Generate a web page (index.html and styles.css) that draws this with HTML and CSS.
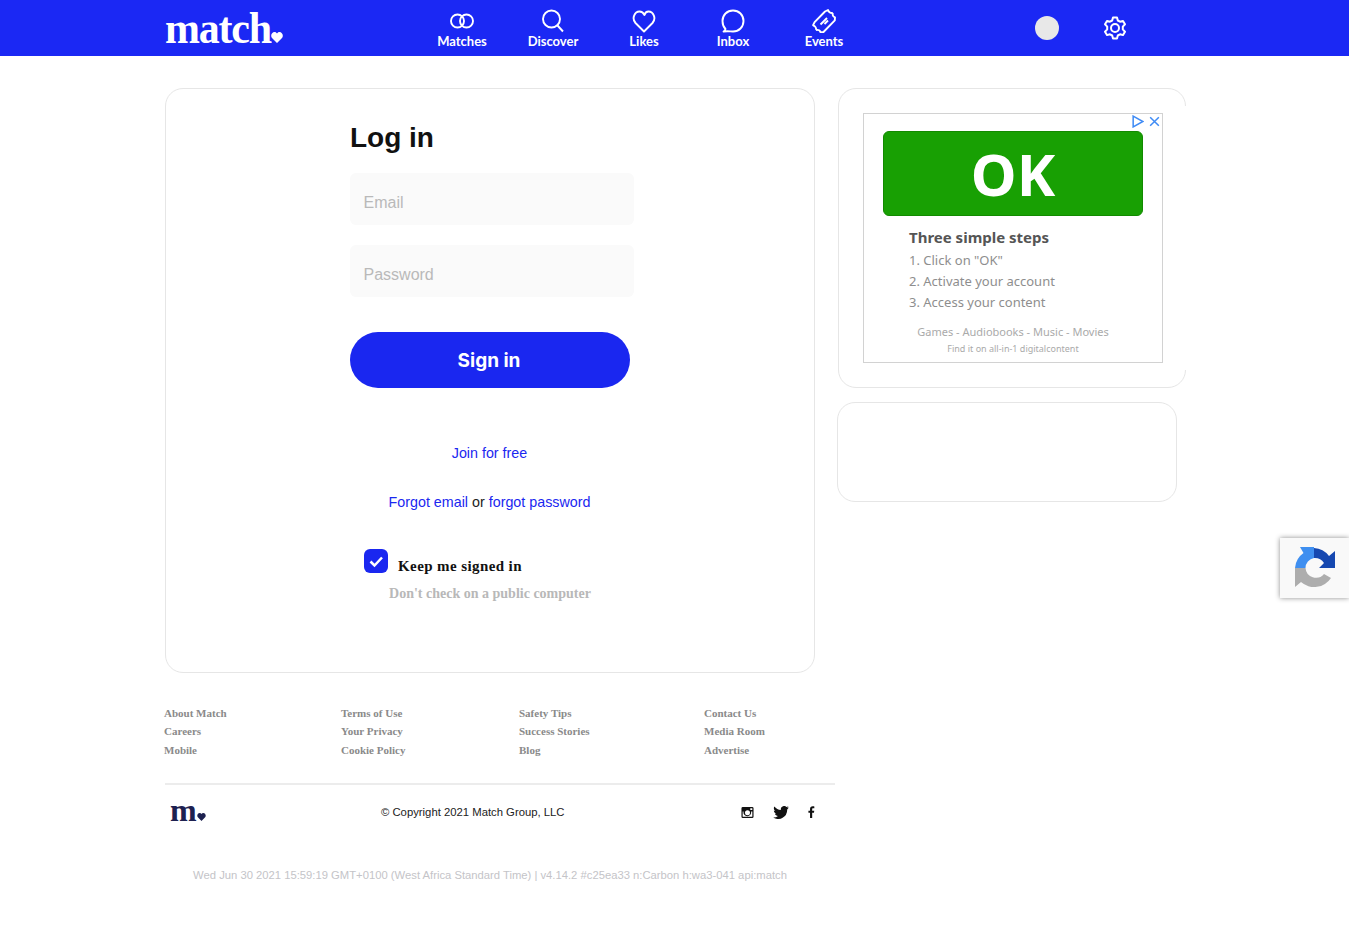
FILE: index.html
```html
<!DOCTYPE html>
<html lang="en">
<head>
    <meta charset="UTF-8">
    <title>Match - Log in</title>
    <link rel="stylesheet" href="styles.css">
</head>
<body>

<header class="topbar">
    <div class="brand"><span class="brand-word">match</span><svg class="brand-heart" viewBox="0 0 12 11"><path d="M6 11 1 6C-1 3.500 1 0 3.500 0 4.700 0 5.500.6 6 1.500 6.500.6 7.300 0 8.500 0 11 0 13 3.500 11 6z" fill="#fff"/></svg></div>
    <nav class="nav">
        <a class="nav-item item-matches">
            <svg class="nav-icon" viewBox="0 0 24 24"><circle cx="7.500" cy="12" r="6.500"/><circle cx="16.500" cy="12" r="6.500"/></svg>
            <span>Matches</span>
        </a>
        <a class="nav-item item-discover">
            <svg class="nav-icon" viewBox="0 0 24 24"><circle cx="10.500" cy="10" r="8.500"/><path d="M16.500 16.500 22 22.500"/></svg>
            <span>Discover</span>
        </a>
        <a class="nav-item item-likes">
            <svg class="nav-icon" viewBox="0 0 24 24"><path d="M12 22.500 3.500 14C-.5 9.500 2.500 2.500 7.500 2.500 10 2.500 11.500 4 12.500 6 13 4 14.500 2.500 16.500 2.500 21.500 2.500 24.500 9.500 20.500 14z"/></svg>
            <span>Likes</span>
        </a>
        <a class="nav-item item-inbox">
            <svg class="nav-icon" viewBox="0 0 24 24"><path d="M4.500 20C2.500 18 1.500 15 1.500 12 1.500 6 6 1.500 12 1.500S22.500 6 22.500 12 18 22.500 12 22.500C9 22.500 7 22 2.500 22.500 3.500 22 4.200 21 4.500 20z"/></svg>
            <span>Inbox</span>
        </a>
        <a class="nav-item item-events">
            <svg class="nav-icon" viewBox="0 0 24 24"><path d="M13 2.500 16 1c.3 1.500 2.500 3.200 4 3l.8.800c-.4 1.600.7 3.200 2.200 3.600l-.2 3L11.500 23l-3 .2c-.4-1.500-2-2.600-3.600-2.200l-.8-.8c.2-1.500-1.500-3.700-3-4l1.500-3z"/><path d="M8.500 15.500 15 9M12.500 15 16 11.500"/></svg>
            <span>Events</span>
        </a>
    </nav>
    <div class="avatar"></div>
    <svg class="gear" viewBox="0 0 24 24"><circle cx="12" cy="12" r="4"/><path d="M10 1.500h4l.8 3 2.200 1.200 3-.8 2 3.400-2.200 2.300v2.800l2.200 2.300-2 3.400-3-.8-2.200 1.200-.8 3h-4l-.8-3L7 18.300l-3 .8-2-3.400 2.200-2.300v-2.800L2 8.300l2-3.400 3 .8 2.200-1.200z"/></svg>
</header>

<main class="page">
    <div class="left-col">
        <section class="card login-card">
            <form class="login-form">
                <h1>Log in</h1>
                <div class="field">Email</div>
                <div class="field">Password</div>
                <button class="signin" type="button">Sign in</button>
                <p class="join"><a>Join for free</a></p>
                <p class="forgot"><a>Forgot email</a> or <a>forgot password</a></p>
                <div class="keep">
                    <span class="checkbox"><svg viewBox="0 0 24 24"><path d="M6.500 12.500 10.500 16.500 18 8.500"/></svg></span>
                    <span class="keep-label">Keep me signed in</span>
                </div>
                <p class="keep-note">Don't check on a public computer</p>
            </form>
        </section>

        <footer class="footer">
            <div class="links">
                <ul class="col-a"><li>About Match</li><li>Careers</li><li>Mobile</li></ul>
                <ul class="col-b"><li>Terms of Use</li><li>Your Privacy</li><li>Cookie Policy</li></ul>
                <ul class="col-c"><li>Safety Tips</li><li>Success Stories</li><li>Blog</li></ul>
                <ul class="col-d"><li>Contact Us</li><li>Media Room</li><li>Advertise</li></ul>
            </div>
            <div class="legal">
                <div class="mini-logo">m<svg viewBox="0 0 12 11"><path d="M6 11 1 6C-1 3.500 1 0 3.500 0 4.700 0 5.500.6 6 1.500 6.500.6 7.300 0 8.500 0 11 0 13 3.500 11 6z" fill="#1d2150"/></svg></div>
                <div class="copyright">© Copyright 2021 Match Group, LLC</div>
                <div class="social">
                    <svg class="ig" viewBox="0 0 14 14"><path fill-rule="evenodd" d="M2 1h10a1.500 1.500 0 0 1 1.500 1.500v9A1.500 1.500 0 0 1 12 13H2A1.500 1.500 0 0 1 .5 11.500v-9A1.500 1.500 0 0 1 2 1zm-.2 5v5.200c0 .3.200.5.500.5h9.400c.3 0 .5-.2.500-.5V6h-1.300a4.200 4.200 0 1 1-8.200 0zM7 4.500a2.700 2.700 0 1 0 0 5.400 2.700 2.700 0 0 0 0-5.400zM10 2.300v2h2.200v-2z"/></svg>
                    <svg class="tw" viewBox="0 0 24 20"><path d="M24 2.400c-.9.400-1.800.7-2.800.8 1-.6 1.800-1.600 2.200-2.700-1 .6-2 1-3.100 1.200A4.900 4.900 0 0 0 11.900 6.200C7.800 6 4.200 4 1.700.9.400 3.200 1 6 3.200 7.500c-.8 0-1.600-.2-2.200-.6 0 2.300 1.600 4.300 3.900 4.800-.7.200-1.500.2-2.200.1.600 2 2.400 3.300 4.600 3.400A9.900 9.900 0 0 1 0 17.700 14 14 0 0 0 21.500 5.300c1-.7 1.900-1.700 2.500-2.900z"/></svg>
                    <svg class="fb" viewBox="0 0 8 14"><path d="M2.300 14V7.800H.4V5.400h1.900V3.600C2.300 1.500 3.500.4 5.400.4c.9 0 1.600.1 1.900.1v2.200H6c-1 0-1.200.5-1.200 1.200v1.500h2.400l-.3 2.400H4.800V14z"/></svg>
                </div>
            </div>
            <p class="build">Wed Jun 30 2021 15:59:19 GMT+0100 (West Africa Standard Time) | v4.14.2 #c25ea33 n:Carbon h:wa3-041 api:match</p>
        </footer>
    </div>

    <aside class="right-col">
        <section class="card ad-card">
            <div class="ad">
                <div class="ad-marks">
                    <svg viewBox="0 0 12 12"><path d="M2 1 11 6 2 11z"/></svg>
                    <svg viewBox="0 0 12 12"><path d="M2 2 10 10M10 2 2 10"/></svg>
                </div>
                <div class="ad-ok">OK</div>
                <div class="ad-steps">
                    <h3>Three simple steps</h3>
                    <p>1. Click on "OK"</p>
                    <p>2. Activate your account</p>
                    <p>3. Access your content</p>
                </div>
                <p class="ad-cats">Games - Audiobooks - Music - Movies</p>
                <p class="ad-find">Find it on all-in-1 digitalcontent</p>
            </div>
        </section>
        <section class="card empty-card"></section>
    </aside>
</main>

<div class="recaptcha">
    <svg viewBox="0 0 41 41">
        <path d="M19 0H5L8.500 6A20 20 0 0 0 0 21H10.500A10 10 0 0 1 19 11z" fill="#3f8ff0"/>
        <path d="M19 1A20 20 0 0 1 34 9L40 4V21H24L29 16A11 11 0 0 0 19 11z" fill="#1648b0"/>
        <path d="M0 21H10.500A10.500 10.500 0 0 0 29 27L36 31A20 20 0 0 1 6 35L0 40z" fill="#adadad"/>
    </svg>
</div>

</body>
</html>
```

FILE: styles.css
```css
* {
    box-sizing: border-box;
}
body {
    margin: 0;
    background-color: #fff;
    color: #111;
    font-family: "Liberation Sans", Arial, sans-serif;
}
p, h1, h3, ul {
    margin: 0;
    padding: 0;
}
ul {
    list-style: none;
}
a {
    color: #1a27f0;
}

/* --- Top bar --- */
.topbar {
    display: flex;
    align-items: center;
    height: 56px;
    padding-left: 165px;
    background-color: #1b28f4;
    color: #fff;
}
.brand {
    display: flex;
    align-items: baseline;
    width: 272px;
    margin-top: 1px;
    font-family: "Liberation Serif", serif;
    font-size: 42px;
    font-weight: bold;
    line-height: 42px;
    letter-spacing: -1.200px;
}
.brand-word {
    display: inline-block;
    transform: scaleY(1.050);
    transform-origin: 0 80%;
}
.brand-heart {
    width: 12px;
    height: 11px;
    margin-left: 0;
}
.nav {
    display: flex;
    align-items: flex-start;
    height: 56px;
    padding-top: 9px;
}
.nav-item {
    display: flex;
    flex-direction: column;
    align-items: center;
    color: #fff;
    font-family: Lato, sans-serif;
    font-size: 13px;
    font-weight: 700;
    line-height: 15px;
}
.nav-item span {
    margin-top: 1px;
}
.nav-icon {
    width: 24px;
    height: 24px;
    fill: none;
    stroke: #fff;
    stroke-width: 1.900;
    stroke-linejoin: round;
}
.item-matches { width: 50px; }
.item-discover { width: 50px; margin-left: 41px; }
.item-likes { width: 40px; margin-left: 46px; }
.item-inbox { width: 40px; margin-left: 49px; }
.item-events { width: 40px; margin-left: 51px; }
.avatar {
    width: 24px;
    height: 24px;
    margin-left: 191px;
    border-radius: 50%;
    background-color: #e8e8e8;
}
.gear {
    width: 24px;
    height: 24px;
    margin-left: 44px;
    fill: none;
    stroke: #fff;
    stroke-width: 2;
    stroke-linejoin: round;
}

/* --- Main layout --- */
.page {
    display: flex;
    align-items: flex-start;
    gap: 23px;
    padding: 32px 0 0 165px;
}
.left-col {
    width: 650px;
}
.right-col {
    width: 348px;
}
.card {
    border: 1px solid #e6e6e6;
    border-radius: 18px;
    background-color: #fff;
}

/* --- Login card --- */
.login-card {
    height: 585px;
    padding: 31px 0 0 184px;
}
.login-form {
    width: 284px;
}
h1 {
    margin-bottom: 17px;
    font-size: 28px;
    font-weight: bold;
    line-height: 36px;
    color: #111;
}
.field {
    height: 52px;
    margin-bottom: 20px;
    padding: 21px 14px 0 13.500px;
    border-radius: 6px;
    background-color: #fafafa;
    color: #b9b9b9;
    font-size: 16px;
    line-height: 18px;
}
.signin {
    display: block;
    width: 280px;
    height: 56px;
    margin-top: 35px;
    padding: 0 2px 0 0;
    border: none;
    border-radius: 28px;
    background-color: #1a27f0;
    color: #fff;
    font-family: Inter, sans-serif;
    font-size: 19px;
    font-weight: 700;
}
.join, .forgot {
    width: 279px;
    text-align: center;
    font-size: 14.300px;
    line-height: 16px;
}
.join {
    margin-top: 57px;
}
.forgot {
    margin-top: 33px;
    color: #222;
}
.keep {
    display: flex;
    align-items: flex-start;
    margin: 39px 0 0 14px;
}
.checkbox {
    width: 24px;
    height: 24px;
    border-radius: 6px;
    background-color: #1a27f0;
}
.checkbox svg {
    display: block;
    fill: none;
    stroke: #fff;
    stroke-width: 2.500;
}
.keep-label {
    margin: 9px 0 0 10px;
    font-family: "Liberation Serif", serif;
    font-size: 15px;
    font-weight: bold;
    line-height: 17px;
    letter-spacing: 0.400px;
    color: #111;
}
.keep-note {
    width: 280px;
    margin-top: 11px;
    font-family: "Liberation Serif", serif;
    font-size: 14px;
    font-weight: bold;
    line-height: 16px;
    text-align: center;
    color: #b8b8b8;
}

/* --- Footer --- */
.footer {
    padding-top: 31px;
}
.links {
    display: flex;
    width: 670px;
    height: 81px;
    border-bottom: 2px solid #ececec;
}
.links ul {
    margin-top: -0.400px;
    font-family: "Liberation Serif", serif;
    font-size: 11px;
    font-weight: bold;
    color: #8a8a8a;
}
.links li {
    height: 18.500px;
    line-height: 18px;
}
.col-a { width: 177px; margin-left: -1px; }
.col-b { width: 178px; }
.col-c { width: 185px; }
.legal {
    display: flex;
    align-items: center;
    width: 670px;
    height: 54px;
}
.mini-logo {
    display: flex;
    align-items: baseline;
    width: 216px;
    padding-left: 5px;
    margin-top: -4px;
    font-family: "Liberation Serif", serif;
    font-size: 32px;
    font-weight: bold;
    line-height: 32px;
    color: #1d2150;
}
.mini-logo svg {
    width: 9px;
    height: 8px;
}
.copyright {
    width: 360px;
    font-size: 11.300px;
    color: #222;
}
.social {
    display: flex;
    align-items: center;
}
.social svg {
    fill: #111;
}
.ig { width: 13px; height: 13px; }
.tw { width: 16px; height: 13px; margin-left: 19px; }
.fb { width: 7px; height: 12px; margin-left: 19px; }
.build {
    width: 650px;
    margin-top: 30px;
    padding-bottom: 50px;
    text-align: center;
    font-size: 11.250px;
    color: #c4c4c8;
}

/* --- Right column --- */
.ad-card {
    position: relative;
    height: 300px;
    padding: 24px 0 0 24px;
}
/* the card's right edge is cut off between the two corners */
.ad-card::after {
    content: "";
    position: absolute;
    top: 17px;
    right: -1px;
    bottom: 17px;
    width: 1px;
    background-color: #fff;
}
.ad {
    position: relative;
    width: 300px;
    height: 250px;
    padding: 17px 19px 0;
    border: 1px solid #d2d2d2;
    font-family: "Noto Sans", sans-serif;
}
.ad-marks {
    position: absolute;
    top: 1px;
    right: 1px;
    display: flex;
    gap: 4px;
}
.ad-marks svg {
    width: 13px;
    height: 13px;
    fill: none;
    stroke: #3f8bf5;
    stroke-width: 1.400;
}
.ad-ok {
    height: 85px;
    border: 1px solid #128a00;
    border-radius: 6px;
    background-color: #18a003;
    color: #fff;
    font-size: 58px;
    font-weight: bold;
    line-height: 83px;
    text-align: center;
}
.ad-steps {
    padding: 9px 0 0 26px;
    font-size: 13px;
    line-height: 21px;
    color: #8e8e8e;
}
.ad-steps h3 {
    font-size: 15px;
    font-weight: bold;
    line-height: 25px;
    color: #555;
}
.ad-cats {
    margin-top: 11px;
    font-size: 11px;
    line-height: 15px;
    text-align: center;
    color: #aaa;
}
.ad-find {
    margin-top: 3px;
    font-size: 9px;
    line-height: 13px;
    text-align: center;
    color: #aaa;
}
.empty-card {
    width: 340px;
    height: 100px;
    margin: 14px 0 0 -1px;
}

/* --- reCAPTCHA badge --- */
.recaptcha {
    position: fixed;
    top: 538px;
    left: 1280px;
    width: 69px;
    height: 60px;
    padding: 9px 0 0 15px;
    background-color: #f9f9f9;
    box-shadow: 0 0 5px rgba(0, 0, 0, 0.45);
}
.recaptcha svg {
    display: block;
    width: 41px;
    height: 41px;
}
```
